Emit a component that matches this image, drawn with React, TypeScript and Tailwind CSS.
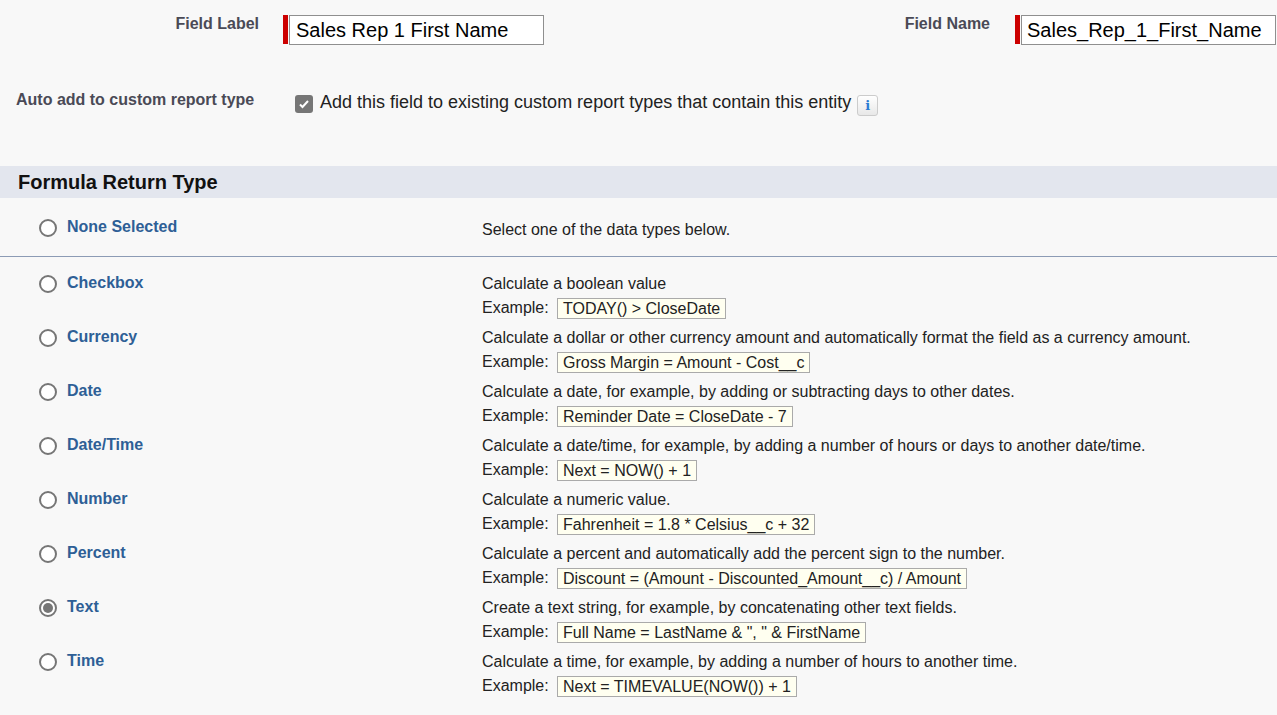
import React from "react";

const rows = [
  ["Checkbox", "Calculate a boolean value", "TODAY() > CloseDate"],
  ["Currency", "Calculate a dollar or other currency amount and automatically format the field as a currency amount.", "Gross Margin = Amount - Cost__c"],
  ["Date", "Calculate a date, for example, by adding or subtracting days to other dates.", "Reminder Date = CloseDate - 7"],
  ["Date/Time", "Calculate a date/time, for example, by adding a number of hours or days to another date/time.", "Next = NOW() + 1"],
  ["Number", "Calculate a numeric value.", "Fahrenheit = 1.8 * Celsius__c + 32"],
  ["Percent", "Calculate a percent and automatically add the percent sign to the number.", "Discount = (Amount - Discounted_Amount__c) / Amount"],
  ["Text", "Create a text string, for example, by concatenating other text fields.", "Full Name = LastName & \", \" & FirstName"],
  ["Time", "Calculate a time, for example, by adding a number of hours to another time.", "Next = TIMEVALUE(NOW()) + 1"],
];

function Radio({ checked }: { checked?: boolean }) {
  return (
    <div className="w-[18px] h-[18px] rounded-full border-2 border-[#767676] bg-white flex items-center justify-center shrink-0">
      {checked && <div className="w-[10px] h-[10px] rounded-full bg-[#767676]" />}
    </div>
  );
}

export default function App() {
  return (
    <div className="w-[1277px] h-[715px] bg-[#f8f8f8] overflow-hidden text-[#222]" style={{ fontFamily: '"Liberation Sans", Arial, sans-serif' }}>
      <div className="flex pt-[15px] h-[45px]">
        <div className="w-[259px] text-right text-[16px] font-bold text-[#4a4a56] leading-[18px]">Field Label</div>
        <div className="ml-[24px] flex">
          <div className="w-[5px] h-[29px] bg-[#c00] mr-[1px]" />
          <div className="w-[255px] h-[30px] border border-[#8f8f8f] bg-white px-[6px] text-[20px] leading-[28px] text-black">Sales Rep 1 First Name</div>
        </div>
        <div className="w-[446px] text-right text-[16px] font-bold text-[#4a4a56] leading-[18px]">Field Name</div>
        <div className="ml-[25px] flex">
          <div className="w-[5px] h-[29px] bg-[#c00] mr-[1px]" />
          <div className="w-[255px] h-[30px] border border-[#8f8f8f] bg-white px-[5px] text-[20px] leading-[28px] text-black">Sales_Rep_1_First_Name</div>
        </div>
      </div>
      <div className="flex mt-[45px] h-[76px]">
        <div className="w-[295px] pl-[16px] text-[16px] font-bold text-[#4a4a56] leading-[18px] pt-[1px]">Auto add to custom report type</div>
        <div className="flex items-start">
          <div className="w-[18px] h-[18px] rounded-[3px] bg-[#767676] flex items-center justify-center mt-[5px]">
            <svg width="12" height="12" viewBox="0 0 12 12"><path d="M2 6.5l2.5 2.5L10 3" stroke="white" strokeWidth="2" fill="none" /></svg>
          </div>
          <span className="ml-[7px] text-[18px] leading-[24px]">Add this field to existing custom report types that contain this entity</span>
          <div className="ml-[6px] mt-[5px] w-[21px] h-[21px] rounded-[3px] border border-[#ccc] bg-gradient-to-b from-white to-[#e8e8e8] flex items-center justify-center text-[13px] font-bold text-[#2a7bd3]" style={{ fontFamily: '"DejaVu Serif", serif' }}>i</div>
        </div>
      </div>
      <div className="h-[32px] bg-[#e3e6ee] pl-[18px] text-[20px] font-bold leading-[32px] text-[#111]">Formula Return Type</div>
      <div className="flex h-[59px] items-start pt-[20px] border-b border-[#8c9bb5]">
        <div className="w-[482px] flex items-start pl-[39px] pt-[1px]">
          <Radio />
          <span className="ml-[10px] text-[16px] font-bold text-[#2e5f96] leading-[18px] -mt-[1px]">None Selected</span>
        </div>
        <div className="text-[16px] leading-[20px] mt-[2px]">Select one of the data types below.</div>
      </div>
      <div className="pt-[16px]">
        {rows.map(([label, desc, ex], i) => (
          <div key={label} className="flex h-[54px]">
            <div className="w-[482px] flex items-start pl-[39px] pt-[2px]">
              <Radio checked={i === 6} />
              <span className="ml-[10px] text-[16px] font-bold text-[#2e5f96] leading-[18px] -mt-[1px]">{label}</span>
            </div>
            <div className="text-[16px]">
              <div className="leading-[20px] mt-[1px]">{desc}</div>
              <div className="flex items-center mt-[2px]">
                <span className="w-[75px]">Example:</span>
                <span className="border border-[#aaa] bg-[#fffff0] px-[5px] h-[21px] leading-[19px] text-[16px]">{ex}</span>
              </div>
            </div>
          </div>
        ))}
      </div>
    </div>
  );
}
